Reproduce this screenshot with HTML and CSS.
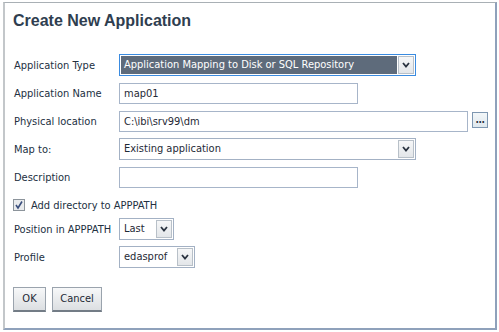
FILE: index.html
```html
<!DOCTYPE html>
<html>
<head>
<meta charset="utf-8">
<link rel="stylesheet" href="styles.css">
</head>
<body>
<div class="frame">
  <h1 class="title">Create New Application</h1>
  <div class="form">
    <div class="row">
      <span class="label">Application Type</span>
      <div class="select select-focus w-type">
        <span class="select-value">Application Mapping to Disk or SQL Repository</span>
        <span class="arrow"><svg width="8" height="6" viewBox="0 0 8 6"><polyline points="1,1 4,4.5 7,1" fill="none" stroke="#2a3340" stroke-width="1.8"/></svg></span>
      </div>
    </div>
    <div class="row">
      <span class="label">Application Name</span>
      <div class="input w-name">map01</div>
    </div>
    <div class="row">
      <span class="label">Physical location</span>
      <div class="input w-loc">C:\ibi\srv99\dm</div>
      <span class="browse">...</span>
    </div>
    <div class="row">
      <span class="label">Map to:</span>
      <div class="select w-map">
        <span class="select-value">Existing application</span>
        <span class="arrow"><svg width="8" height="6" viewBox="0 0 8 6"><polyline points="1,1 4,4.5 7,1" fill="none" stroke="#2a3340" stroke-width="1.8"/></svg></span>
      </div>
    </div>
    <div class="row">
      <span class="label">Description</span>
      <div class="input w-name"></div>
    </div>
    <div class="check-row">
      <span class="checkbox"><svg width="10" height="10" viewBox="0 0 10 10"><polyline points="2,5 4,8 8,1.5" fill="none" stroke="#3b4f7d" stroke-width="1.6"/></svg></span>
      <span class="check-label">Add directory to APPPATH</span>
    </div>
    <div class="row">
      <span class="label">Position in APPPATH</span>
      <div class="select w-pos">
        <span class="select-value">Last</span>
        <span class="arrow"><svg width="8" height="6" viewBox="0 0 8 6"><polyline points="1,1 4,4.5 7,1" fill="none" stroke="#2a3340" stroke-width="1.8"/></svg></span>
      </div>
    </div>
    <div class="row">
      <span class="label">Profile</span>
      <div class="select w-prof">
        <span class="select-value">edasprof</span>
        <span class="arrow"><svg width="8" height="6" viewBox="0 0 8 6"><polyline points="1,1 4,4.5 7,1" fill="none" stroke="#2a3340" stroke-width="1.8"/></svg></span>
      </div>
    </div>
  </div>
  <div class="buttons">
    <span class="btn btn-ok">OK</span>
    <span class="btn btn-cancel">Cancel</span>
  </div>
</div>
</body>
</html>
```
FILE: styles.css
```css
html, body {
  margin: 0;
  padding: 0;
  background: #ffffff;
}
body {
  font-family: "DejaVu Sans Condensed", "DejaVu Sans", sans-serif;
  font-stretch: condensed;
  font-size: 11px;
  color: #22303f;
}
.frame {
  box-sizing: border-box;
  width: 494px;
  height: 328px;
  margin: 2px 0 0 3px;
  border-top: 1px solid #a9b0b5;
  border-left: 2px solid #c3c7ca;
  border-right: 2px solid #8fa1bb;
  border-bottom: 2px solid #8fa1bb;
  padding: 8px 0 0 8px;
}
.title {
  margin: 0;
  font-family: "Liberation Sans", Arial, sans-serif;
  font-stretch: normal;
  font-size: 16px;
  line-height: 20px;
  font-weight: bold;
  color: #2f3e50;
}
.form {
  margin-top: 23px;
  display: flex;
  flex-direction: column;
}
.row {
  display: flex;
  align-items: center;
  height: 22px;
  margin-bottom: 6px;
}
.label {
  width: 105px;
  padding-left: 1px;
  flex: none;
}
.input {
  box-sizing: border-box;
  height: 21px;
  border: 1px solid #a7b5c9;
  padding: 0 4px;
  line-height: 19px;
  background: #fff;
  color: #1f2a36;
}
.w-name { width: 239px; }
.w-loc { width: 349px; }
.browse {
  box-sizing: border-box;
  width: 16px;
  height: 16px;
  margin-left: 4px;
  margin-top: -3px;
  border: 1px solid #7e97b1;
  background: linear-gradient(#f3f7f9, #dfe8ee);
  font-size: 10px;
  line-height: 14px;
  text-align: center;
  font-weight: bold;
  color: #2a3340;
  letter-spacing: -0.5px;
}
.select {
  box-sizing: border-box;
  height: 22px;
  border: 1px solid #a3b1c4;
  display: flex;
  align-items: stretch;
  background: #fff;
  padding: 1px;
}
.select-value {
  flex: 1;
  padding-left: 3px;
  line-height: 18px;
  color: #1f2a36;
  white-space: nowrap;
}
.select-focus {
  border-color: #3a8be0;
}
.select-focus .select-value {
  background: #5e6b7b;
  color: #ffffff;
  margin-right: 1px;
}
.arrow {
  box-sizing: border-box;
  width: 16px;
  flex: none;
  border: 1px solid #b8c0c8;
  background: linear-gradient(#f6f7f8, #e3e6e9);
  display: flex;
  align-items: center;
  justify-content: center;
}
.w-type { width: 297px; }
.w-map { width: 297px; }
.w-pos { width: 55px; }
.w-prof { width: 76px; }
.check-row {
  display: flex;
  align-items: center;
  height: 18px;
  margin-top: 2px;
  margin-bottom: 4px;
}
.checkbox {
  box-sizing: border-box;
  width: 12px;
  height: 12px;
  border: 1px solid #8c949b;
  background: #e9ebed;
  display: flex;
  align-items: center;
  justify-content: center;
}
.check-label {
  margin-left: 6px;
}
.buttons {
  display: flex;
  gap: 6px;
  margin-top: 13px;
  padding-left: 0;
}
.btn {
  box-sizing: border-box;
  height: 25px;
  border: 1px solid #9aa3ad;
  border-bottom: 2px solid #737c86;
  background: linear-gradient(#f7f8f9, #dcdfe2);
  line-height: 22px;
  text-align: center;
  color: #1f2a36;
}
.btn-ok { width: 33px; }
.btn-cancel { width: 50px; }
```
